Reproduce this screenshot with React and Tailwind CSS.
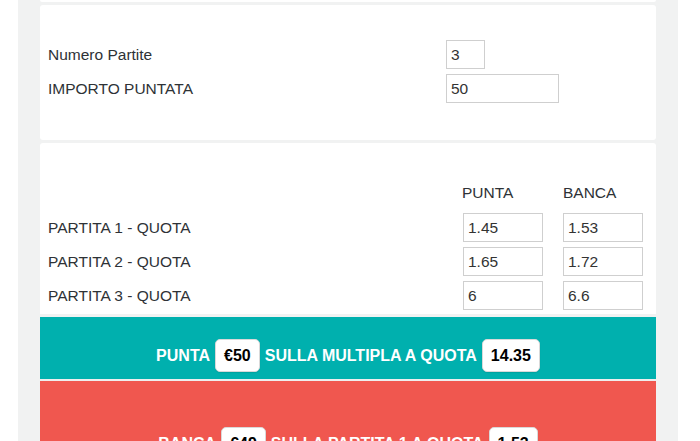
const matches = [
  { label: "PARTITA 1 - QUOTA", punta: "1.45", banca: "1.53" },
  { label: "PARTITA 2 - QUOTA", punta: "1.65", banca: "1.72" },
  { label: "PARTITA 3 - QUOTA", punta: "6", banca: "6.6" },
];

const Field = ({ value, className = "" }) => (
  <input
    readOnly
    value={value}
    className={`h-[29px] border border-[#cfcfcf] bg-white px-[4px] text-[15.5px] text-[#333] outline-none ${className}`}
  />
);

const Badge = ({ children }) => (
  <span className="inline-flex h-[33px] items-center rounded-[5px] border border-[#d9d9d9] bg-white px-[8px] text-[16px] font-bold text-black shadow-[0_1px_1px_rgba(0,0,0,0.08)]">
    {children}
  </span>
);

const ResultBand = ({ tone, verb, stake, middle, odds }) => (
  <div className={`flex justify-center gap-[5px] text-[16px] font-bold text-white ${tone}`}>
    <span className="flex h-[33px] items-center">{verb}</span>
    <Badge>{stake}</Badge>
    <span className="flex h-[33px] items-center">{middle}</span>
    <Badge>{odds}</Badge>
  </div>
);

export default function App() {
  return (
    <div className="min-h-screen bg-white pl-[18px] pr-[22px] font-['Liberation_Sans',Arial,sans-serif]">
      <div className="flex min-h-[441px] flex-col bg-[#f1f2f2] px-[22px]">
        <div className="h-[2px] rounded-b-[3px] bg-white" />

        {/* settings */}
        <div className="mt-[3px] h-[135px] rounded-[3px] bg-white pl-[8px] pt-[35px] text-[15.5px] leading-[18px] text-[#2e3236]">
          <div className="grid grid-cols-[398px_1fr] items-center gap-y-[5px]">
            <span>Numero Partite</span>
            <Field value="3" className="w-[39px]" />
            <span>IMPORTO PUNTATA</span>
            <Field value="50" className="w-[113px]" />
          </div>
        </div>

        {/* odds */}
        <div className="mt-[3px] h-[171px] rounded-t-[3px] bg-white pl-[8px] pt-[41px] text-[15.5px] leading-[18px] text-[#2e3236]">
          <div className="grid grid-cols-[395px_80px_80px] items-center gap-x-[20px] gap-y-[5px]">
            <span />
            <span className="mb-[6px] -ml-[1px]">PUNTA</span>
            <span className="mb-[6px]">BANCA</span>
            {matches.map((m) => (
              <div key={m.label} className="contents">
                <span>{m.label}</span>
                <Field value={m.punta} className="w-[80px]" />
                <Field value={m.banca} className="w-[80px]" />
              </div>
            ))}
          </div>
        </div>

        <div className="mt-[3px] flex flex-col">
          <ResultBand
            tone="h-[62px] bg-[#00b0ae] pt-[22px]"
            verb="PUNTA"
            stake="€50"
            middle="SULLA MULTIPLA A QUOTA"
            odds="14.35"
          />
          <div className="h-[2px] bg-[#eeeeee]" />
          <ResultBand
            tone="h-[60px] overflow-hidden bg-[#f0574f] pt-[46px]"
            verb="BANCA"
            stake="€49"
            middle="SULLA PARTITA 1 A QUOTA"
            odds="1.53"
          />
        </div>
      </div>
    </div>
  );
}
